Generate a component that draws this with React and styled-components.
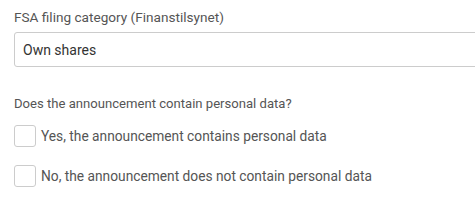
import React from 'react';
import styled, { createGlobalStyle } from 'styled-components';

const GlobalStyle = createGlobalStyle`
    body {
        margin: 0;
        background: #fff;
        font-family: Roboto, "Liberation Sans", Arial, sans-serif;
    }
`;

const Form = styled.div`
    padding: 9px 0 0 14px;
    display: flex;
    flex-direction: column;
`;

const Field = styled.div`
    display: flex;
    flex-direction: column;
`;

const Label = styled.label`
    font-size: 13.6px;
    line-height: 16px;
    color: #555;
    margin-bottom: 7px;
`;

const Input = styled.input`
    box-sizing: border-box;
    width: calc(100% + 20px);
    height: 35px;
    padding: 0 8px;
    border: 1px solid #ccc;
    border-radius: 3px;
    font-family: inherit;
    font-size: 14px;
    color: #333;
    background: #fff;
    outline: none;
`;

const Question = styled.div`
    margin-top: 29px;
    font-size: 13.1px;
    line-height: 16px;
    color: #555;
`;

const Option = styled.label`
    display: flex;
    align-items: center;
    gap: 5px;
    margin-top: ${props => props.first ? '13px' : '18px'};
    font-size: 13.75px;
    color: #555;
    cursor: pointer;
`;

const Box = styled.span`
    box-sizing: border-box;
    width: 22px;
    height: 22px;
    border: 1px solid #ccc;
    border-radius: 3px;
    background: #fff;
`;

export default function App() {
    return (
        <>
            <GlobalStyle />
            <Form>
                <Field>
                    <Label>FSA filing category (Finanstilsynet)</Label>
                    <Input defaultValue="Own shares" readOnly />
                </Field>
                <Question>Does the announcement contain personal data?</Question>
                <Option first>
                    <Box />
                    Yes, the announcement contains personal data
                </Option>
                <Option>
                    <Box />
                    No, the announcement does not contain personal data
                </Option>
            </Form>
        </>
    );
}
